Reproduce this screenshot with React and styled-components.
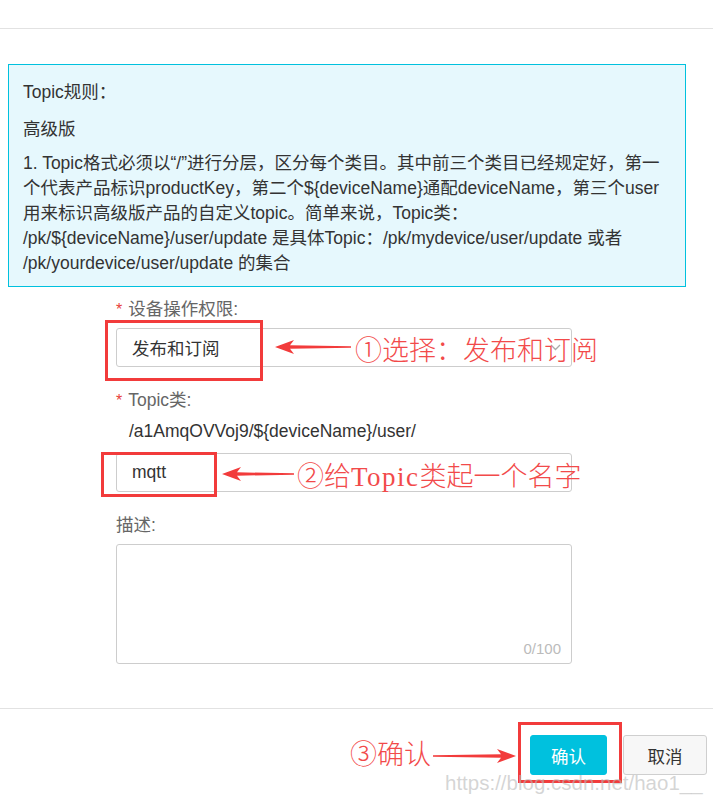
import React from 'react';
import styled, { createGlobalStyle } from 'styled-components';

const GlobalStyle = createGlobalStyle`
	html, body {
		margin: 0;
		padding: 0;
		background: #fff;
	}
	body {
		font-family: 'Liberation Sans', 'Noto Sans CJK SC', sans-serif;
		color: #333;
	}
`;

const Page = styled.div`
	position: relative;
	width: 713px;
	height: 800px;
	overflow: hidden;
	background: #fff;
`;

const Header = styled.div`
	height: 28px;
	border-bottom: 1px solid #e2e2e2;
`;

const Body = styled.div`
	padding: 35px 27px 0 8px;
`;

const Notice = styled.div`
	border: 1px solid #00c1de;
	background: #e6f8fd;
	padding: 15px 14px 10px;
	font-size: 17.5px;
	line-height: 25px;
	color: #333;
`;

const NoticeLine = styled.p`
	margin: 0 0 ${(p) => p.gap || 0}px;
`;

const Form = styled.div`
	margin-left: 108px;
	width: 456px;
	padding-top: 10px;
	display: flex;
	flex-direction: column;
	gap: 21px;
`;

const FormItem = styled.div`
	display: flex;
	flex-direction: column;
	gap: 6px;
`;

const Label = styled.div`
	font-size: 17.5px;
	line-height: 25px;
	color: #666;
`;

const Star = styled.span`
	color: #e8413a;
	margin-right: 6px;
	font-size: 16px;
`;

const Field = styled.div`
	height: 39px;
	box-sizing: border-box;
	border: 1px solid #cdcdcd;
	border-radius: 3px;
	padding: 0 10px 0 15px;
	display: flex;
	align-items: center;
	justify-content: space-between;
	font-size: 17.5px;
	color: #333;
`;

const Prefix = styled.div`
	padding: 0 0 3px 13px;
	font-size: 17.5px;
	line-height: 25px;
	color: #333;
`;

const TextArea = styled.div`
	height: 120px;
	box-sizing: border-box;
	border: 1px solid #cdcdcd;
	border-radius: 3px;
	padding: 0 10px 4px;
	display: flex;
	align-items: flex-end;
	justify-content: flex-end;
`;

const Counter = styled.span`
	font-size: 15px;
	line-height: 20px;
	color: #bbb;
`;

const Footer = styled.div`
	margin-top: 44px;
	border-top: 1px solid #e2e2e2;
	padding: 26px 6px 0 0;
	display: flex;
	justify-content: flex-end;
	gap: 16px;
`;

const Button = styled.button`
	height: 40px;
	width: ${(p) => p.w}px;
	border-radius: 3px;
	font-family: 'Liberation Sans', 'Noto Sans CJK SC', sans-serif;
	font-size: 17.5px;
	cursor: pointer;
	border: 1px solid ${(p) => (p.primary ? '#00c1de' : '#cfcfcf')};
	background: ${(p) => (p.primary ? '#00c1de' : '#f7f7f7')};
	color: ${(p) => (p.primary ? '#fff' : '#333')};
`;

// 标注层：红框、箭头、文字（盖在截图上面的说明）
const Mark = styled.div`
	position: absolute;
	left: ${(p) => p.x}px;
	top: ${(p) => p.y}px;
	width: ${(p) => p.w}px;
	height: ${(p) => p.h}px;
	box-sizing: border-box;
	border: 3px solid #f23b3b;
	pointer-events: none;
`;

const Note = styled.div`
	position: absolute;
	left: ${(p) => p.x}px;
	top: ${(p) => p.y}px;
	font-family: 'Liberation Serif', 'Noto Sans CJK SC', serif;
	font-size: 27px;
	line-height: 32px;
	font-weight: 300;
	color: #f24a4a;
	white-space: nowrap;
`;

const Latin = styled.span`
	letter-spacing: 1.5px;
`;

const ArrowSvg = styled.svg`
	position: absolute;
	left: ${(p) => p.x}px;
	top: ${(p) => p.y - 8}px;
	overflow: visible;
`;

const Watermark = styled.div`
	position: absolute;
	left: 445px;
	top: 770px;
	font-size: 20.5px;
	line-height: 26px;
	color: rgba(185, 185, 185, 0.6);
	white-space: nowrap;
	pointer-events: none;
`;

function Arrow({ x, y, len, right }) {
	const d = `M0,8 L19,1 L15,6.3 L${len},7.3 L${len},8.7 L15,9.7 L19,15 Z`;
	return (
		<ArrowSvg x={x} y={y} width={len} height={16} viewBox={`0 0 ${len} 16`}>
			<path d={d} fill='#f23b3b' transform={right ? `translate(${len},0) scale(-1,1)` : undefined} />
		</ArrowSvg>
	);
}

function Chevron() {
	return (
		<svg width='11' height='7' viewBox='0 0 11 7'>
			<path d='M1 1 L5.5 5.5 L10 1' fill='none' stroke='#aaa' strokeWidth='1.3' />
		</svg>
	);
}

export default function App() {
	return (
		<Page>
			<GlobalStyle />
			<Header />
			<Body>
				<Notice>
					<NoticeLine gap={12}>Topic规则：</NoticeLine>
					<NoticeLine gap={9}>高级版</NoticeLine>
					<NoticeLine>
						1. Topic格式必须以“/”进行分层，区分每个类目。其中前三个类目已经规定好，第一
						<br />
						个代表产品标识productKey，第二个${'{deviceName}'}通配deviceName，第三个user
						<br />
						用来标识高级版产品的自定义topic。简单来说，Topic类：
						<br />
						/pk/${'{deviceName}'}/user/update 是具体Topic：/pk/mydevice/user/update 或者
						<br />
						/pk/yourdevice/user/update 的集合
					</NoticeLine>
				</Notice>

				<Form>
					<FormItem>
						<Label>
							<Star>*</Star>设备操作权限:
						</Label>
						<Field>
							<span>发布和订阅</span>
							<Chevron />
						</Field>
					</FormItem>

					<FormItem>
						<Label>
							<Star>*</Star>Topic类:
						</Label>
						<Prefix>/a1AmqOVVoj9/${'{deviceName}'}/user/</Prefix>
						<Field>
							<span>mqtt</span>
						</Field>
					</FormItem>

					<FormItem>
						<Label>描述:</Label>
						<TextArea>
							<Counter>0/100</Counter>
						</TextArea>
					</FormItem>
				</Form>
			</Body>

			<Footer>
				<Button primary w={77}>
					确认
				</Button>
				<Button w={84}>取消</Button>
			</Footer>

			<Mark x={105} y={320} w={158} h={61} />
			<Arrow x={275} y={347} len={76} />
			<Note x={355} y={335}>①选择：发布和订阅</Note>

			<Mark x={101} y={452} w={116} h={45} />
			<Arrow x={222} y={474} len={72} />
			<Note x={297} y={461}>
				②给<Latin>Topic</Latin>类起一个名字
			</Note>

			<Mark x={518} y={722} w={104} h={61} />
			<Arrow x={433} y={756} len={83} right />
			<Note x={350} y={739}>③确认</Note>

			<Watermark>https://blog.csdn.net/hao1__</Watermark>
		</Page>
	);
}
